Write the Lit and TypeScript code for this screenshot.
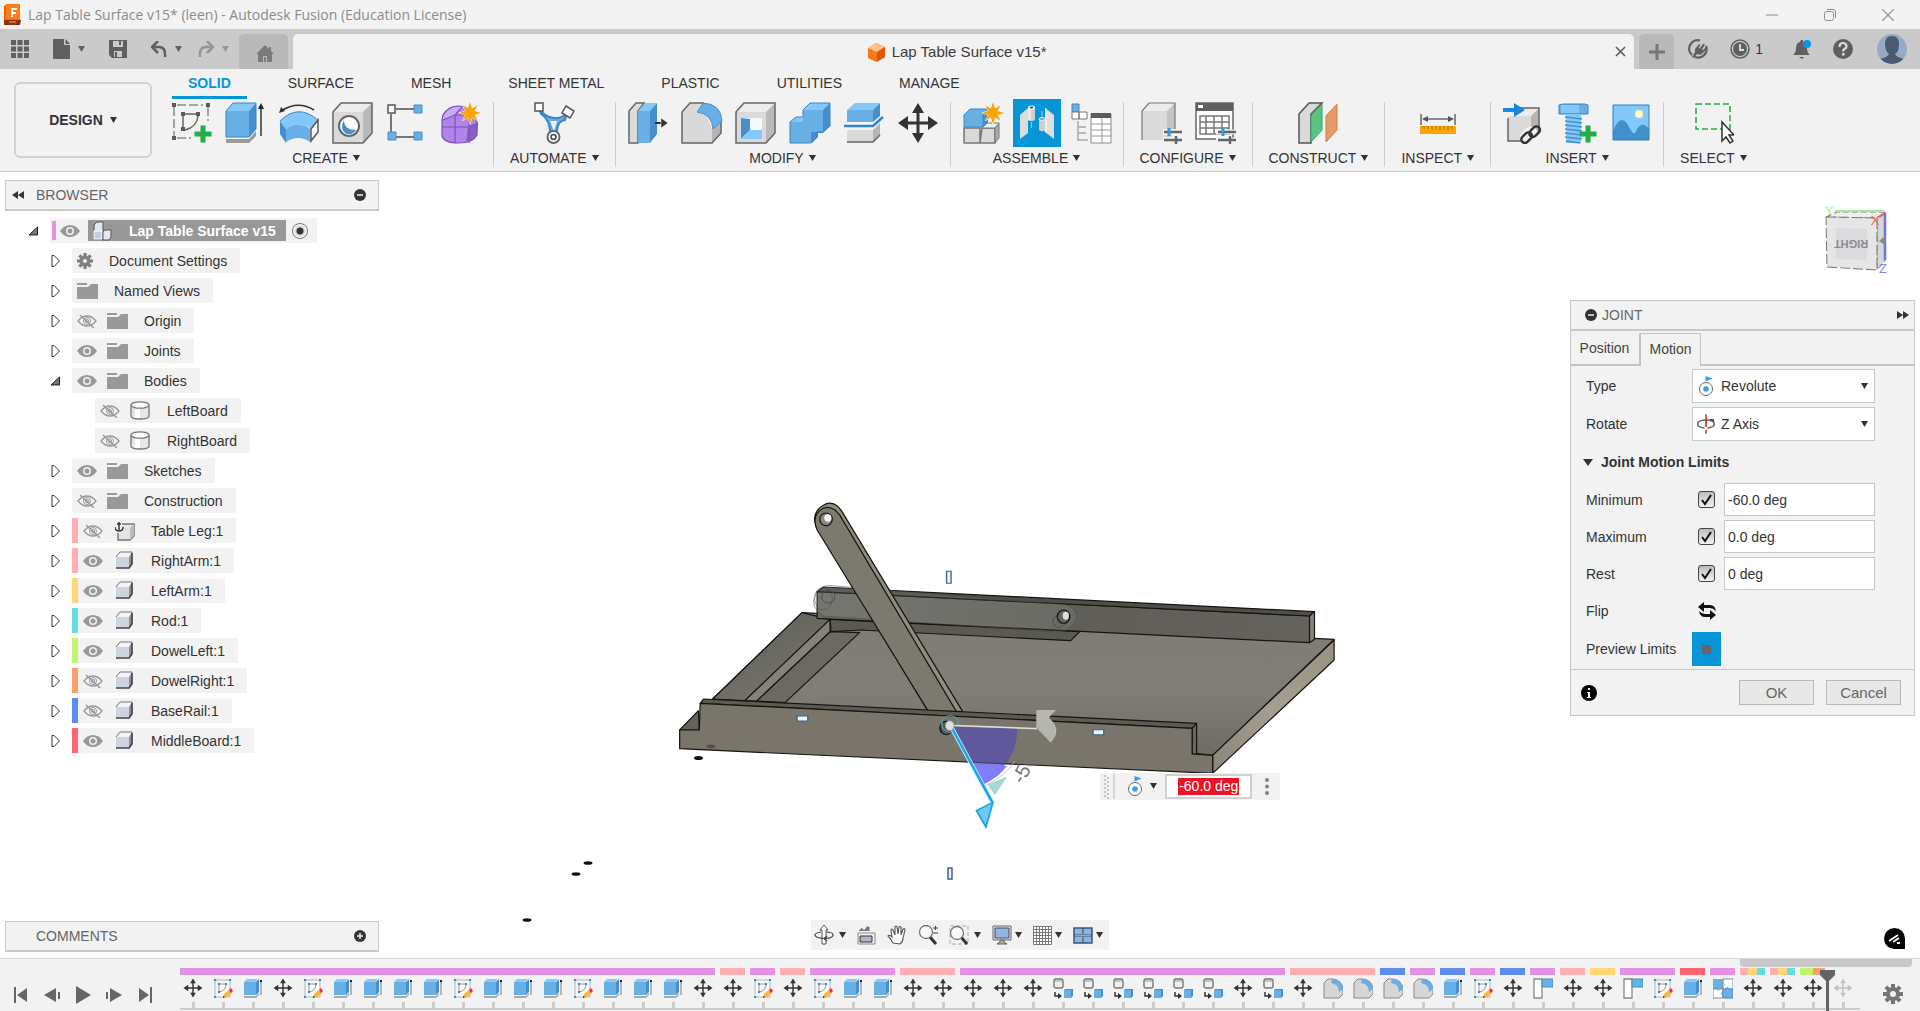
import { LitElement, html, svg, css, nothing, TemplateResult } from "lit";
import { customElement } from "lit/decorators.js";
import { classMap } from "lit/directives/class-map.js";
import { styleMap } from "lit/directives/style-map.js";

type Art = ReturnType<typeof svg>;

/** Wraps drawing content in an inline svg of the given size. */
const pic = (w: number, h: number, art: Art, box = `0 0 ${w} ${h}`) =>
  html`<svg width=${w} height=${h} viewBox=${box} aria-hidden="true">${art}</svg>`;

const caret = () => pic(7, 6, svg`<path d="M0 0h7L3.500 6z" fill="currentColor"/>`);

/* ---------- Ribbon artwork, all on a 42 x 42 board ---------- */

const spark = (x: number, y: number) => svg`<g transform="translate(${x} ${y})">
  <path d="M0-11 2-4.500 7.500-7.500 4.500-2 11 0 4.500 2 7.500 7.500 2 4.500 0 11-2 4.500-7.500 7.500-4.500 2-11 0-4.500-2-7.500-7.500-2-4.500z" fill="#f9a504" stroke="#f2f2f2" stroke-width="1" paint-order="stroke"/></g>`;

const plus = (x: number, y: number) => svg`<path d="M${x - 2.5} ${y - 8.5}h5v6h6v5h-6v6h-5v-6h-6v-5h6z" fill="#22ad4b"/>`;

const moveArt = svg`<path d="M21 1l6 10h-4.500v8.500H31V14l10 7-10 7v-5.500h-8.500V31H27l-6 10-6-10h4.500v-8.500H11V28L1 21l10-7v5.500h8.500V11H15z" fill="#333"/>`;

const ribbon: Record<string, Art> = {
  sketch: svg`<path d="M4 5v30M7 3h26M38 5v14M7 36h14" stroke="#8a8a8a" stroke-width="1.500" stroke-dasharray="9 3" fill="none"/>
    <path d="M13 12h14M13 12v15M28 14q-1 11-13 14" stroke="#666" stroke-width="1.500" fill="none"/>
    <path d="M2 1h4v4H2zM36 1h4v4h-4zM2 34h4v4H2zM11 10h4v4h-4zM26 10h4v4h-4zM11 25h4v4h-4z" fill="#5a5a5a"/>${plus(33, 32)}`,
  extrude: svg`<path d="M2 9 9 1h23l-7 8z" fill="#84c7fb"/><path d="M2 9h23v26H2z" fill="#68afe6"/><path d="M25 9l7-8v26l-7 8z" fill="#468fcb"/>
    <path d="M2 9 9 1h23v26l-7 8H2z" fill="none" stroke="#3f86bf"/><path d="M2 37h23l7-8v5l-7 7H2z" fill="#9b9b9b"/><path d="M37 6v28" stroke="#333" stroke-width="1.500"/><path d="M37 1l3 6h-6z" fill="#222"/>`,
  revolve: svg`<path d="M3 9Q20-2 36 8" fill="none" stroke="#333" stroke-width="1.500"/><path d="M1 11l2-6 4 4z" fill="#333"/>
    <path d="M2 19Q20 1 40 18l-7 9Q20 18 8 27z" fill="#84c7fb"/><path d="M2 19l6 8v14l-6-9z" fill="#468fcb"/><path d="M8 27q12-9 24 0v13q-12-8-24 0z" fill="#68afe6"/>
    <path d="M2 19Q20 1 40 18" fill="none" stroke="#3f86bf"/><path d="M33 27l7-9v12l-7 9z" fill="#fff" stroke="#555" stroke-width="1.500"/>`,
  hole: svg`<path d="M1 10 9 1h31v30l-9 10H1z" fill="#b9b9b9"/><path d="M1 10 9 1h31l-9 9z" fill="#ececec"/><path d="M1 10h30v31H1z" fill="#dadada"/><path d="M1 10 9 1h31v30l-9 10H1z" fill="none" stroke="#666" stroke-width="1.500"/>
    <ellipse cx="17" cy="24" rx="10" ry="10" fill="#fff" stroke="#666" stroke-width="2"/><path d="M12 18q0 10 12 10-3 5-9 4-8-4-3-14z" fill="#468fcb"/>`,
  pattern: svg`<path d="M10 7h18M5 12v18M10 35h18" stroke="#777" stroke-width="2"/><path d="M2 3h7v8H2z" fill="#fff" stroke="#555" stroke-width="1.500"/>
    <path d="M28 3h8v8h-8zM2 30h8v8H2zM28 30h8v8h-8z" fill="#68afe6" stroke="#468fcb"/>`,
  form: svg`<path d="M3 12Q10 2 20 4q12 1 15 9l3 8-1 12q-6 8-18 8-14 1-17-6V18z" fill="#b084ea"/><path d="M28 25l10-4-1 12q-4 6-11 7z" fill="#8a5fc4"/><path d="M3 13Q12 2 24 5l-8 8-13 5z" fill="#cba9fa"/>
    <path d="M2 25h27l9-4M15 13v28M3 18l12-5h14v28M15 13l8-9M2 18v16q2 7 17 7 14 0 18-8V21l-3-8q-4-9-15-9Q8 4 3 13z" fill="none" stroke="#7d50bb" stroke-width="1.200"/>${spark(30, 11)}`,
  automate: svg`<path d="M6 6q5 9 15 10 9 1 13-6l-2 8q-9 1-8 16h-7Q18 18 8 12z" fill="#68afe6" stroke="#3f86bf" stroke-width="2"/><path d="M17 19h7l-3 10z" fill="#f2f2f2"/>
    <path d="M2 1h8v8H2zM33 4l8 5-4 7-8-5z" fill="#fff" stroke="#555" stroke-width="1.500"/><circle cx="20.500" cy="35" r="6" fill="#fff" stroke="#666" stroke-width="2"/><circle cx="20.500" cy="35" r="2.500" fill="none" stroke="#444" stroke-width="1.500"/>`,
  press: svg`<path d="M2 9l7-8h8l-6 8v32H2z" fill="#dcdcdc" stroke="#666" stroke-width="1.500"/><path d="M11 9l7-8h12l-7 8z" fill="#84c7fb"/><path d="M11 9h12v32H11z" fill="#68afe6"/><path d="M23 9l7-8v31l-7 9z" fill="#468fcb"/>
    <path d="M28 21h8" stroke="#333" stroke-width="2"/><path d="M34 16l7 5-7 5z" fill="#333" stroke="#f2f2f2" stroke-width=".5"/>`,
  fillet: svg`<path d="M1 10 9 1h12l-6 9q14 2 15 17l10-8v12l-9 10H1z" fill="#d9d9d9"/><path d="M31 27l9-8v12l-9 10z" fill="#b5b5b5"/><path d="M1 10 9 1h14M40 19v12l-9 10H1V10" fill="none" stroke="#666" stroke-width="1.500"/>
    <path d="M16 10l6-9q18 1 19 18l-9 8Q31 12 16 10z" fill="#68afe6" stroke="#468fcb"/>`,
  shell: svg`<path d="M1 10 9 1h31v30l-9 10H1z" fill="#b9b9b9"/><path d="M1 10 9 1h31l-9 9z" fill="#ececec"/><path d="M1 10h30v31H1z" fill="#dadada"/><path d="M1 10 9 1h31v30l-9 10H1z" fill="none" stroke="#666" stroke-width="1.500"/>
    <path d="M6 16h21v21H6z" fill="#f8f8f8"/><path d="M6 16l9 1v11l-9 9z" fill="#468fcb"/><path d="M6 37l9-9h12v9z" fill="#84c7fb"/>`,
  combine: svg`<path d="M1 21l6-6h7V8l7-7h20v23l-7 7h-5v4l-6 6H1z" fill="#468fcb"/><path d="M1 20h13V8h20v22H22v11H1z" fill="#68afe6"/><path d="M14 8l7-7h20l-7 7zM1 20l6-5h7v5z" fill="#84c7fb"/><path d="M1 20l6-5h7V8l7-7h20v23l-7 6h-6v5l-6 6H1z" fill="none" stroke="#3f86bf"/>`,
  split: svg`<path d="M4 8l8-7h25l-7 7z" fill="#84c7fb"/><path d="M4 8h26v12H4z" fill="#68afe6"/><path d="M30 8l7-7v13l-7 6z" fill="#468fcb"/><path d="M1 24h29l10-9" fill="none" stroke="#2e86d1" stroke-width="2.500"/>
    <path d="M4 28h26v12H4z" fill="#dadada"/><path d="M30 28l7-7v12l-7 7z" fill="#b5b5b5"/><path d="M4 40h26l7-7" fill="none" stroke="#666" stroke-width="1.500"/>`,
  move: moveArt,
  component: svg`<path d="M2 13l6-6h18l-5 6v12H2z" fill="#68afe6" stroke="#3f86bf"/><path d="M21 13l5-6v14l-5 4z" fill="#468fcb"/><path d="M2 26h16v15H2zM20 26h13v15H18z" fill="#d9d9d9" stroke="#777" stroke-width="1.500"/><path d="M33 26l4-5v15l-4 5z" fill="#aaa" stroke="#777"/><path d="M20 26l5-5h12l-4 5z" fill="#eee" stroke="#777"/>${spark(31, 11)}`,
  joint: svg`<path d="M4 13l8-7v25l-8 6z" fill="#dcdcdc"/><path d="M12 6l3-2 4 2v12q-3 2-7 0z" fill="#cfcfcf"/><path d="M12 6h3v13l-3-1z" fill="#e8e8e8"/><ellipse cx="15.500" cy="5.500" rx="3.500" ry="2" fill="#f0f0f0"/><ellipse cx="15.500" cy="5.500" rx="1.800" ry="1" fill="#444"/>
    <path d="M15.500 20v6M26 9v6" stroke="#7dcbf2" stroke-width="1.200"/><path d="M23 17q3 2 6 0v12q-4 1-6-1z" fill="#cfcfcf"/><ellipse cx="26" cy="17" rx="3" ry="1.500" fill="#5aa7d6" stroke="#eee"/><path d="M29 6l9 7v24l-9-7z" fill="#dedede"/><path d="M29 6l2 1v24l-2-1z" fill="#f0f0f0"/>`,
  table: svg`<path d="M2 2h7v8H2z" fill="#68afe6" stroke="#3f86bf"/><path d="M2 10h7v7H2zM9 10h8v7H9z" fill="#fff" stroke="#777"/><path d="M8 19v19h10M8 25h8M8 31h8" fill="none" stroke="#aaa" stroke-width="1.500"/>
    <path d="M21 12h20v29H21z" fill="#fff" stroke="#888"/><path d="M21 11h20v5H21z" fill="#5b5b5b"/><path d="M21 22h20M21 28h20M21 34h20M32 16v25" stroke="#999"/>`,
  configure: svg`<path d="M2 9 9 1h26v28l-6 9H2z" fill="#c4c4c4"/><path d="M2 9 9 1h26l-8 8z" fill="#ececec"/><path d="M2 9h25v29H2z" fill="#dadada"/><path d="M2 38V9l7-8h26v26" fill="none" stroke="#777" stroke-width="1.200"/><path d="M23 30h19M23 38h19" stroke="#f2f2f2" stroke-width="6"/><path d="M24 30h18M24 38h18" stroke="#666" stroke-width="2.500"/><path d="M29 26v8" stroke="#2e9be8" stroke-width="3"/><path d="M36 34v8" stroke="#666" stroke-width="2.500"/>`,
  configTable: svg`<path d="M2 1h37v36H2z" fill="#fff" stroke="#666" stroke-width="1.500"/><path d="M2 1h37v8H2z" fill="#5f5f5f"/><path d="M4 3h5v3H4z" fill="#fff"/><path d="M6 14h29v18H6zM6 20h29M6 26h29M12 14v18M20 14v18M28 14v18" fill="none" stroke="#777" stroke-width="1.500"/><path d="M22 30h20M22 38h20" stroke="#f2f2f2" stroke-width="5"/><path d="M24 30h18M24 38h18" stroke="#666" stroke-width="2.500"/><path d="M29 26v8" stroke="#2e9be8" stroke-width="3"/><path d="M36 34v8" stroke="#666" stroke-width="2.500"/>`,
  construct: svg`<path d="M2 12 12 1h13l-11 11v29H2z" fill="#dadada" stroke="#555" stroke-width="1.500"/><path d="M14 14 25 2v26L14 40z" fill="#5ac582" stroke="#35a764"/><path d="M29 14 40 2v26L29 40z" fill="#e59a67" stroke="#cf8047"/>`,
  inspect: svg`<path d="M4 12v11M38 12v11" stroke="#666" stroke-width="1.500"/><path d="M7 17h28" stroke="#666" stroke-width="1.500"/><path d="M5 17l6-3v6zM37 17l-6-3v6z" fill="#555"/><path d="M3 24h36v8H3z" fill="#f9a504"/><path d="M7 24v3M11 24v3M15 24v4M19 24v3M23 24v4M27 24v3M31 24v4M35 24v3" stroke="#a86b00"/>`,
  insertLink: svg`<path d="M6 12l9-6h22l-9 8z" fill="#ececec"/><path d="M6 14h23v25H6z" fill="#dadada"/><path d="M29 14l8-8v24l-8 8z" fill="#b5b5b5"/><path d="M12 6h25v24M6 16v23h15" fill="none" stroke="#666" stroke-width="1.500"/><path d="M1 6h11V1l11 7-11 7v-5H1z" fill="#1787e0"/>
    <g fill="none" stroke="#f2f2f2" stroke-width="6"><rect x="20" y="30" width="13" height="7" rx="3.500" transform="rotate(-45 26 33)"/></g><g fill="none" stroke="#333" stroke-width="2.500"><rect x="19" y="32" width="12" height="7" rx="3.500" transform="rotate(-45 25 36)"/><rect x="27" y="26" width="12" height="7" rx="3.500" transform="rotate(-45 33 30)"/></g>`,
  bolt: svg`<path d="M3 3l4-1h22l3 1v9H3z" fill="#68afe6" stroke="#3f86bf"/><path d="M5 3h18v8H5z" fill="#84c7fb"/><path d="M10 12h15v29H10z" fill="#84c7fb"/><path d="M9 15l17 2M9 19l17 2M9 23l17 2M9 27l17 2M9 31l17 2M9 35l17 2M10 39l14 2" stroke="#468fcb" stroke-width="1.500"/>${plus(32, 32)}`,
  image: svg`<path d="M3 3h36v35H3z" fill="#84c7fb"/><path d="M3 29q8-20 16-4 4 8 6 6 6-14 14-4v11H3z" fill="#4290cc"/><circle cx="29" cy="12" r="4" fill="#fffbc8" stroke="#e8e6a0"/><path d="M3 3h36v35H3z" fill="none" stroke="#2f7fbd"/>`,
  select: svg`<path d="M4 2h34v25H4z" fill="none" stroke="#22ad4b" stroke-width="1.500" stroke-dasharray="6 3"/><path d="M30 20v19l4-4 4 6 3-2-4-6h5z" fill="#fff" stroke="#333" stroke-width="1.500"/>`,
};

const groups: { label: string; tools: [string, string][] }[] = [
  { label: "CREATE", tools: [["sketch", "Create Sketch"], ["extrude", "Extrude"], ["revolve", "Revolve"], ["hole", "Hole"], ["pattern", "Pattern"], ["form", "Create Form"]] },
  { label: "AUTOMATE", tools: [["automate", "Automated Modeling"]] },
  { label: "MODIFY", tools: [["press", "Press Pull"], ["fillet", "Fillet"], ["shell", "Shell"], ["combine", "Combine"], ["split", "Split Body"], ["move", "Move"]] },
  { label: "ASSEMBLE", tools: [["component", "New Component"], ["joint", "Joint"], ["table", "Joint Table"]] },
  { label: "CONFIGURE", tools: [["configure", "Configure"], ["configTable", "Configuration Table"]] },
  { label: "CONSTRUCT", tools: [["construct", "Offset Plane"]] },
  { label: "INSPECT", tools: [["inspect", "Measure"]] },
  { label: "INSERT", tools: [["insertLink", "Insert Derive"], ["bolt", "Insert Fastener"], ["image", "Canvas"]] },
  { label: "SELECT", tools: [["select", "Select"]] },
];

const ribbonTabs = ["SOLID", "SURFACE", "MESH", "SHEET METAL", "PLASTIC", "UTILITIES", "MANAGE"];

/* ---------- Browser tree ---------- */

/** Eight-toothed gear centred on 0,0 with a hole of radius r. */
const gearArt = (r: number, fill: string) => svg`<g fill=${fill}>
  ${[0, 45, 90, 135].map((a) => svg`<path d="M-2-10h4V10h-4z" transform="rotate(${a})" fill-rule="evenodd" clip-path="url(#ring${r})"/>`)}
  <path fill-rule="evenodd" d="M-7 0a7 7 0 1 1 14 0 7 7 0 1 1-14 0zM${-r} 0a${r} ${r} 0 1 0 ${2 * r} 0 ${r} ${r} 0 1 0 ${-2 * r} 0z"/>
  <circle r=${r} fill="#f2f2f2"/></g>`;

const eyeOn = () => pic(20, 14, svg`<path d="M0 7Q4 1 10 1t10 6q-4 6-10 6T0 7z" fill="#999"/><circle cx="10" cy="7" r="4" fill="#f2f2f2"/><circle cx="10" cy="7" r="2.500" fill="#999"/>`);
const eyeOff = () => pic(20, 14, svg`<path d="M1 7q4-5 9-5t9 5q-4 5-9 5T1 7z" fill="none" stroke="#999" stroke-width="1.300"/><circle cx="10" cy="7" r="3.500" fill="none" stroke="#999"/><circle cx="10" cy="7" r="1.500" fill="none" stroke="#999"/><path d="M3 1l14 13" stroke="#999" stroke-width="1.500"/>`);

const nodeArt: Record<string, () => TemplateResult> = {
  gear: () => pic(16, 16, gearArt(2.5, "#808080"), "-10 -10 20 20"),
  folder: () => pic(21, 16, svg`<path d="M0 0h10v2H0zM0 4h11l3-3h7v15H0z" fill="#999"/>`),
  body: () => pic(21, 19, svg`<path d="M1 4v11q0 3 9 3t9-3V4" fill="#e6e6e8" stroke="#777" stroke-width="1.300"/><path d="M5 6h5v11H5z" fill="#fff"/><ellipse cx="10" cy="4" rx="9" ry="3.200" fill="#fafafa" stroke="#777" stroke-width="1.300"/>`),
  anchored: () => pic(20, 20, svg`<path d="M3 6l4-3h12v12l-4 4H3z" fill="#e4e4e4" stroke="#777" stroke-width="1.500"/><path d="M15 7l4-4v12l-4 4z" fill="#bbb"/><path d="M4 1v8M1 3h6M0 6q0 4 4 4t4-4" fill="none" stroke="#f2f2f2" stroke-width="4"/><path d="M4 1v8M2 3h4M0 6q0 4 4 4t4-4" fill="none" stroke="#333" stroke-width="1.500"/>`),
  part: () => pic(20, 19, svg`<path d="M1 6l4-5h12v12l-3 4H1z" fill="#8a8f99"/><path d="M1 6l4-5h12l-3 5z" fill="#f4f5f7"/><path d="M1 6h13v11H1z" fill="#cdd3df"/><path d="M1 6l4-5h12v12l-3 4" fill="none" stroke="#777"/><path d="M1 17h13l3-4V2" fill="none" stroke="#444" stroke-width="1.500"/>`),
  assembly: () => pic(20, 20, svg`<path d="M2 4l3-3h6v17H2z" fill="#dfe6f0" stroke="#555"/><path d="M2 10h8v8H2z" fill="#c3cfdf" stroke="#fff"/><path d="M11 11l2-2h6v7l-2 3h-6z" fill="#e2e8f0" stroke="#555"/>`),
};

interface Node { level: number; name: string; icon: string; open?: boolean; visible?: boolean; color?: string; }

const nodes: Node[] = [
  { level: 1, name: "Document Settings", icon: "gear" },
  { level: 1, name: "Named Views", icon: "folder" },
  { level: 1, name: "Origin", icon: "folder", visible: false },
  { level: 1, name: "Joints", icon: "folder", visible: true },
  { level: 1, name: "Bodies", icon: "folder", visible: true, open: true },
  { level: 2, name: "LeftBoard", icon: "body", visible: false },
  { level: 2, name: "RightBoard", icon: "body", visible: false },
  { level: 1, name: "Sketches", icon: "folder", visible: true },
  { level: 1, name: "Construction", icon: "folder", visible: false },
  { level: 1, name: "Table Leg:1", icon: "anchored", visible: false, color: "#ffaeb1" },
  { level: 1, name: "RightArm:1", icon: "part", visible: true, color: "#ffaeb1" },
  { level: 1, name: "LeftArm:1", icon: "part", visible: true, color: "#ffd778" },
  { level: 1, name: "Rod:1", icon: "part", visible: true, color: "#65dde2" },
  { level: 1, name: "DowelLeft:1", icon: "part", visible: true, color: "#c5f46f" },
  { level: 1, name: "DowelRight:1", icon: "part", visible: false, color: "#ff9f6b" },
  { level: 1, name: "BaseRail:1", icon: "part", visible: false, color: "#5f8bec" },
  { level: 1, name: "MiddleBoard:1", icon: "part", visible: true, color: "#ff6573" },
];

/* ---------- Timeline ---------- */

const P = "#e391e3", K = "#ffaeb1", B = "#5f8bec", Y = "#ffd778", R = "#ff6573", C = "#65dde2", G = "#c5f46f", O = "#ff9f6b";
const bands: [number, string[]][] = [
  [18, [P]], [1, [K]], [1, [P]], [1, [K]], [3, [P]], [2, [K]], [11, [P]], [3, [K]], [1, [B]], [1, [P]], [1, [B]], [1, [P]],
  [1, [B]], [1, [P]], [1, [K]], [1, [Y]], [2, [P]], [1, [R]], [1, [P]], [1, [K, Y, C]], [1, [K, Y, C]], [1, [G, O]],
];
const featureCodes = "msemseeeeseeeseeemmsmseemmmmmbbbbbbmbmffffesmpmmpsejmmmm";
const featureNames: Record<string, string> = { m: "Move", s: "Sketch", e: "Extrude", b: "Component from body", f: "Fillet", p: "Plane", j: "Joint" };
const featureArt: Record<string, Art> = {
  m: svg`<g transform="scale(.476)">${moveArt}</g>`,
  s: svg`<path d="M2 2h15v17H2z" fill="#f8f8f8" stroke="#b5b5b5"/><path d="M6 6h7q0 7-7 8z" fill="none" stroke="#999"/><path d="M1 1h2v2H1zM16 1h2v2h-2zM1 18h2v2H1zM5 5h2v2H5zM12 5h2v2h-2zM5 13h2v2H5z" fill="#2e8be0"/><path d="M10 20l1-4 5-4 3 3-5 4z" fill="#f8b53c"/><path d="M16 12l2-2 2 3-2 2z" fill="#f03030"/><path d="M10 20l0-2 2 1z" fill="#333"/>`,
  e: svg`<path d="M1 4l3-3h11l-3 3z" fill="#84c7fb"/><path d="M1 4h12v13H1z" fill="#68afe6"/><path d="M13 4l3-3v13l-3 3z" fill="#468fcb"/><path d="M1 18h12l3-3v2l-3 3H1z" fill="#aaa"/><path d="M18 2v15" stroke="#777"/><path d="M17 2h2v2h-2z" fill="#222"/>`,
  b: svg`<rect x="1" y="1" width="9" height="9" rx="2" fill="#f0f0f0" stroke="#777" stroke-width="1.400"/><path d="M2 3h7" stroke="#999"/><path d="M2 14v4h4" fill="none" stroke="#333" stroke-width="1.500"/><path d="M5 15l4 3-4 3z" fill="#333"/><path d="M11 12l1-1h8v7l-2 2h-7z" fill="#468fcb"/><path d="M11 12h7v8h-7z" fill="#68afe6"/>`,
  f: svg`<path d="M1 5l4-4h5q9 1 10 10v5l-4 4H1z" fill="#d6d6d6" stroke="#888"/><path d="M9 1q10 0 11 10l-4 3Q16 6 8 5z" fill="#68afe6"/>`,
  p: svg`<path d="M1 1h8v19H1z" fill="#fff" stroke="#888" stroke-width="1.300"/><path d="M9 1h11v8H9z" fill="#68afe6" stroke="#468fcb"/>`,
  j: svg`<path d="M0 1h10v10H0z" fill="#68afe6"/><path d="M10 1h10v10h-4q-1-3-3 0h-3V8q3-1 0-3z" fill="#fff" stroke="#888"/><path d="M0 11h4q1 3 3 0h3v3q-3 1 0 3v3H0z" fill="#fff" stroke="#888"/><path d="M10 11h3q1-3 3 0h4v9H10v-3q-3-1 0-3z" fill="#68afe6" stroke="#468fcb"/>`,
};

/* ---------- Model drawing ---------- */

const model = svg`
  <svg x="660" y="480" width="700" height="360" viewBox="0 0 1568 1080" preserveAspectRatio="none">
    <defs>
      <linearGradient id="floor" x1="0" y1="0" x2="0" y2="1"><stop offset="0" stop-color="#7d7c75"/><stop offset=".55" stop-color="#807e77"/><stop offset="1" stop-color="#6d6b64"/></linearGradient>
      <linearGradient id="beam" x1="0" y1="0" x2=".7" y2="1"><stop offset="0" stop-color="#595851"/><stop offset=".6" stop-color="#6c6b64"/><stop offset="1" stop-color="#7a7871"/></linearGradient>
      <linearGradient id="rail" x1="0" y1="0" x2="1" y2="0"><stop offset="0" stop-color="#6c6c65"/><stop offset=".5" stop-color="#5f5e58"/><stop offset="1" stop-color="#64625c"/></linearGradient>
      <linearGradient id="side" x1="0" y1="1" x2="1" y2="0"><stop offset="0" stop-color="#8b857a"/><stop offset=".5" stop-color="#a69e91"/><stop offset="1" stop-color="#98917f"/></linearGradient>
    </defs>
    <g class="solid">
      <path d="M318 398 1510 478 1238 826 118 657z" fill="url(#floor)"/>
      <path d="M1510 480v60L1238 880v-54z" fill="url(#side)"/>
      <path d="M318 398 381 418 190 662 118 657z" fill="url(#beam)"/>
      <path d="M381 418v37L217 663l-27-1z" fill="#858379"/>
      <path d="M382 455l65 3L280 668l-63-5z" fill="#6a6962"/>
      <path d="M381 418 940 455l-20 27L450 450l-67 5z" fill="#5a5952"/>
      <path d="M352 335 1455 408v80L352 415z" fill="url(#rail)"/>
      <path d="M352 335l14-14L1466 395l-11 13z" fill="#4f4e48"/>
      <path d="M1455 408l11-13v83l-11 10z" fill="#8a8478"/>
      <path d="M44 750l42-58 2 58z" fill="#64625b"/>
    </g>
    <path d="M375 316 910 374q30 15 20 50-12 32-40 32L365 408q-30-30-18-60 8-26 28-32z" fill="#bbb" fill-opacity=".14" stroke="#444" stroke-opacity=".6" stroke-width="2"/>
    <g fill="none" stroke="#444" stroke-width="2"><ellipse cx="377" cy="350" rx="15" ry="19"/><ellipse cx="366" cy="356" rx="20" ry="34" stroke-opacity=".6"/><ellipse cx="894" cy="424" rx="14" ry="18"/></g>
    <g class="solid">
      <path d="M350 140 346 118q2-30 20-42 16-14 32 3l8 12L678 695l-78-3z" fill="#8f8c80"/>
      <path d="M352 150q-10-30 0-50 18-30 40-10l10 14L664 695l-64-3z" fill="#7c796e"/>
      <ellipse cx="372" cy="118" rx="14" ry="19" fill="#888"/><ellipse cx="376" cy="114" rx="8" ry="11" fill="#fff" stroke="none"/>
      <path d="M90 670l8-13L1202 730l-10 15z" fill="#5c5a53"/>
      <path d="M1192 745l10-15v95l-10-5z" fill="#6a675f"/>
      <path d="M44 750h44l2-80L1192 745v77l46 4v54L44 806z" fill="#79756b"/>
    </g>
    <ellipse cx="904" cy="410" rx="14" ry="20" fill="#65645e" stroke="#111" stroke-width="3"/><ellipse cx="909" cy="407" rx="7" ry="12" fill="#ddd"/>
    <ellipse cx="641" cy="744" rx="14" ry="20" fill="#4e5757" stroke="#111" stroke-width="3"/>
    <ellipse cx="650" cy="732" rx="19" ry="25" fill="none" stroke="#5c9194" stroke-width="4"/>
    <path d="M655 740 800 745q2 100-75 168z" fill="#544eb0" fill-opacity=".72"/>
    <path d="M697 852 777 858q-18 34-52 55z" fill="#817dff"/>
    <path d="M650 736 845 746" stroke="#bbb" stroke-width="5"/><path d="M650 736l195 10" stroke="#eee" stroke-width="2"/>
    <path d="M843 690h44l-36 52-8 4z" fill="#b8b6b1"/><path d="M847 748 870 712q32 38 5 75z" fill="#b5b5b0" stroke="#ccc"/>
    <path d="M727 918q50-32 68-75" fill="none" stroke="#bbb" stroke-width="2"/>
    <path d="M735 914 776 892 750 944z" fill="#a5d8d6" stroke="#86bebc"/>
    <path d="M652 740 742 962" stroke="#cfeefd" stroke-width="10"/><path d="M652 740 744 966" stroke="#1ca4e8" stroke-width="6"/>
    <path d="M709 992 746 967 730 1041z" fill="#6fc9f5" stroke="#19a2e6" stroke-width="4"/>
    <ellipse cx="649" cy="737" rx="10" ry="15" fill="#ddd" stroke="#8a8a8a" stroke-width="2"/>
    <g fill="#edf5fb" stroke="#3c628c" stroke-width="3"><path d="M642 274h10v36h-10zM307 708h24v15h-24zM970 749h24v15h-24z"/></g>
    <ellipse cx="114" cy="799" rx="9" ry="4" fill="#754747" stroke="#222"/>
  </svg>
  <rect x="948" y="868" width="4" height="11" fill="#edf5fb" stroke="#3c628c" stroke-width="1.500"/>
  <text x="1023" y="785" transform="rotate(-62 1023 785)" font-size="20" fill="#777">-5<tspan fill-opacity=".35">6°</tspan></text>
  <g fill="#111"><ellipse cx="698.500" cy="758" rx="4.500" ry="2"/><ellipse cx="588" cy="863" rx="4.500" ry="1.800"/><ellipse cx="576" cy="874" rx="4.500" ry="1.800"/><ellipse cx="527" cy="920" rx="4.500" ry="1.800"/></g>`;

const viewCube = svg`
  <path d="M15 17 26 12h48l-8 6z" fill="#eee" stroke="#777" stroke-dasharray="6 3"/><path d="M66 18l8-6v49l-8 9z" fill="#d6d6d6" stroke="#777" stroke-dasharray="6 3"/>
  <path d="M15 17l51 1v52l-50-3z" fill="#e6e6e7" stroke="#777" stroke-dasharray="10 3"/><path d="M25 28l31 1v31l-31-1z" fill="#d9dbde"/>
  <path d="M24 11h49" stroke="#9dec9d" stroke-width="2"/><path d="M74 13v47" stroke="#7272f0" stroke-width="2.500"/><path d="M74 13l-6 4" stroke="#e55" stroke-width="2"/><path d="M68 41l6-5v9z" fill="#888"/>
  <g font-size="11" text-anchor="middle"><text x="40" y="40" transform="rotate(180 40 44)" font-weight="700" fill="#8a8d90" dy="8">RIGHT</text>
  <text x="18" y="15" font-size="13" fill="#98f098">Y</text><text x="64" y="25" font-size="13" fill="#f06a60">X</text><text x="72" y="73" font-size="13" fill="#8585f5">Z</text></g>`;

const revoluteArt = svg`<circle cx="9" cy="13" r="6.500" fill="#fff" stroke="#666"/><circle cx="9" cy="13" r="2.800" fill="#3d9be9"/><path d="M8.500 6V0l7 2.500-6 2.500z" fill="#3d9be9"/>`;
const axisArt = svg`<path d="M9 0v20" stroke="#d0401c" stroke-width="1.500"/><ellipse cx="9" cy="10" rx="8.500" ry="4" fill="none" stroke="#666" stroke-width="1.500"/><path d="M9 13v3" stroke="#f4f4f4" stroke-width="3"/><path d="M9 4v8" stroke="#d0401c" stroke-width="1.500"/><path d="M12 5l5 0v4z" fill="#555"/>`;

@customElement("app-root")
export class AppRoot extends LitElement {
  static styles = css`
    :host { display: flex; flex-direction: column; min-height: 100vh; background: #fff; color: #333; font: 14px/16px "Liberation Sans", Arial, sans-serif; }
    *, *::before { box-sizing: border-box; }
    svg { display: block; flex: none; }
    button { font: inherit; color: inherit; background: none; border: 0; padding: 0; margin: 0; display: flex; align-items: center; justify-content: center; }
    h1, h2, h3, ul { margin: 0; padding: 0; font: inherit; list-style: none; }

    .title { display: flex; align-items: center; height: 29px; background: #f3f3f3; color: #8c8c8c; padding: 0 26px 0 3px; gap: 7px; }
    .title h1 { flex: 1; font: 14px/20px "Open Sans", sans-serif; }
    .title .wins { display: flex; gap: 46px; }

    .tabs { display: flex; align-items: flex-end; height: 40px; background: #cacaca; color: #606060; }
    .quick { display: flex; align-items: center; align-self: stretch; padding-left: 11px; }
    .quick button { height: 24px; }
    .quick .pair { gap: 8px; }
    .quick .gapL { margin-left: 24px; }
    .quick .gapS { margin-left: 16px; }
    .quick .dim { color: #959595; }
    .home { width: 49px; height: 35px; margin: 0 5px 0 10px; background: #b9b9b9; border-radius: 5px 5px 0 0; color: #7b7b7b; padding: 4px 0 0 3px; }
    .doc { flex: 1; display: flex; align-items: center; height: 35px; background: #f2f2f2; border-radius: 5px 5px 0 0; padding-right: 6px; }
    .doc .name { flex: 1; display: flex; align-items: center; justify-content: center; gap: 6px; padding-left: 8px; padding-top: 1px; font-size: 15px; line-height: 20px; color: #3c3c3c; }
    .doc button { width: 16px; height: 20px; }
    .add { width: 35px; height: 35px; margin-left: 5px; background: #b9b9b9; border-radius: 5px 5px 0 0; color: #777; }
    .status { display: flex; align-items: center; align-self: stretch; padding: 0 13px 0 14px; }
    .status .jobs { gap: 5px; margin: 0 30px 0 22px; color: #34346a; }
    .status .help { margin: 0 24px 0 21px; }

    .ribbon { display: flex; background: #f2f2f2; border-bottom: 1px solid #ccc; height: 103px; }
    .workspace { width: 138px; height: 76px; margin: 13px 0 0 14px; border: 2px solid #d2d2d2; border-radius: 6px; font-weight: 700; gap: 7px; }
    .tools { flex: 1; min-width: 0; }
    .rtabs { display: flex; gap: 25px; padding-left: 20px; height: 30px; align-items: flex-end; }
    .rtabs button { height: 28px; padding: 0 16px 2px; border-bottom: 3px solid transparent; }
    .rtabs .on { font-weight: 700; color: #0696d7; border-color: #0696d7; }
    .groups { display: flex; padding: 3px 0 0 7px; }
    .group { padding: 0 8px; border-right: 1px solid #ccc; height: 65px; }
    .group:last-child { border: 0; }
    .icons { display: flex; justify-content: center; gap: 6px; }
    .icons button { width: 48px; height: 48px; margin-top: -3px; }
    .icons .on { background: #0696d7; }
    .group .label { margin: 0 auto; padding: 0 8px; height: 22px; gap: 5px; }

    .stage { position: relative; flex: 1; display: grid; min-height: 780px; background: #fff; overflow: hidden; }
    .scene { position: absolute; inset: 0; width: 100%; height: 100%; font-family: "Liberation Sans", Arial, sans-serif; }
    .solid path, .solid ellipse { stroke: #16140f; stroke-width: 1.2; vector-effect: non-scaling-stroke; stroke-linejoin: round; }
    .solid ellipse + ellipse { stroke: none; }
    .left, .right, .nav { grid-area: 1 / 1; position: relative; }
    .left { display: flex; flex-direction: column; justify-content: space-between; justify-self: start; width: 374px; margin: 8px 0 6px 5px; }
    .bar { display: flex; align-items: center; height: 31px; background: #f2f2f2; border: 1px solid #c8c8c8; border-bottom-width: 2px; color: #666; padding: 0 12px 0 6px; }
    .bar h2 { flex: 1; padding-left: 12px; }
    .bar.low h2 { padding-left: 24px; }
    .tree { display: flex; flex-direction: column; gap: 5px; padding-top: 7px; margin-left: -5px; }
    .row { display: flex; align-items: center; height: 25px; }
    .l0 { padding-left: 22px; } .l1 { padding-left: 44px; } .l2 { padding-left: 67px; }
    .toggle { width: 22px; margin-right: 6px; height: 25px; display: flex; align-items: center; justify-content: center; }
    .chip { display: flex; align-items: center; align-self: stretch; background: #f2f2f2; padding-right: 13px; }
    .strip { width: 6px; align-self: stretch; }
    .eye { margin-left: 5px; width: 20px; }
    .ico { margin-left: 5px; }
    .eye + .ico { margin-left: 10px; }
    .strip ~ .eye + .ico { margin-left: 12px; }
    .txt { margin-left: 16px; white-space: nowrap; }
    .root { padding: 0 9px 0 2px; }
    .root .strip { width: 4px; margin: 3px 0; }
    .root .eye { margin-left: 4px; }
    .picked { display: flex; align-items: center; align-self: stretch; margin: 2px 6px 2px 8px; padding: 0 10px 0 4px; gap: 17px; background: #989898; color: #fff; font-weight: 700; white-space: nowrap; }
    .root input { appearance: none; margin: 0; width: 16px; height: 16px; border-radius: 50%; border: 1px solid #777; background: radial-gradient(circle, #333 3px, #cfd6de 4px, #fff 7px); }

    .right { justify-self: end; align-self: start; width: 345px; margin: 50px 5px 0 0; }
    .cube { display: flex; margin-left: 241px; height: 78px; overflow: visible; margin-top: -22px; margin-bottom: 22px; }
    .cube svg { overflow: visible; font-family: "Liberation Sans", Arial, sans-serif; }
    .panel { background: #f2f2f2; border: 1px solid #c8c8c8; }
    .phead { display: flex; align-items: center; height: 30px; padding: 0 5px 0 14px; gap: 5px; border-bottom: 2px solid #c8c8c8; color: #666; }
    .phead h2 { flex: 1; }
    .ptabs { display: flex; height: 35px; border-bottom: 2px solid #c4c4c4; padding-top: 2px; color: #444; }
    .ptabs button { width: 68px; padding: 0 1px 2px 0; height: 31px; }
    .ptabs .on { height: 33px; width: 62px; padding: 0 0 3px; background: #f2f2f2; border: 1px solid #c4c4c4; border-left-width: 2px; border-bottom: 0; }
    .form { display: flex; flex-direction: column; gap: 4px; padding: 3px 39px 3px 15px; border-bottom: 1px solid #c8c8c8; }
    .field { display: grid; grid-template-columns: 106px 32px 1fr; align-items: center; min-height: 34px; }
    .field.num { min-height: 33px; }
    .field h3 { grid-column: 1 / -1; display: flex; align-items: center; gap: 8px; font-weight: 700; margin-left: -3px; }
    .combo { grid-column: 2 / -1; display: grid; align-items: center; }
    .combo > * { grid-area: 1 / 1; }
    .combo svg { margin-left: 5px; pointer-events: none; }
    .combo svg:last-child { justify-self: end; margin: 0 7px 0 0; }
    select { appearance: none; width: 100%; height: 34px; margin: 0; padding: 0 20px 0 28px; background: #fff; border: 1px solid #c8c8c8; border-radius: 0; font: inherit; color: #333; }
    input[type="text"] { width: 100%; min-width: 0; height: 33px; margin: 0; padding: 0 3px; background: #fff; border: 1px solid #c8c8c8; border-radius: 0; font: inherit; color: #333; }
    input[type="checkbox"] { appearance: none; margin: 0 0 0 6px; width: 17px; height: 17px; border: 1px solid #444; border-radius: 3px; background: linear-gradient(#bbb, #f2f2f2); }
    .check { display: grid; align-items: center; }
    .check > * { grid-area: 1 / 1; }
    .check svg { margin-left: 8px; pointer-events: none; }
    .flip { width: 30px; height: 30px; }
    .preview { width: 29px; height: 34px; background: #0696d7; }
    .preview::before { content: ""; width: 9px; height: 9px; background: #666; }
    .pfoot { display: flex; align-items: center; height: 45px; padding: 0 13px 0 10px; gap: 12px; }
    .pfoot button { width: 75px; height: 25px; background: #e8e8e8; border: 1px solid #b8b8b8; color: #666; font-size: 15px; }
    .pfoot .info { width: auto; height: auto; border: 0; background: none; margin-right: auto; }

    .hud { position: absolute; left: 57.3%; top: 76.4%; display: flex; align-items: center; width: 180px; height: 27px; background: #f2f2f2; }
    .hud .grip { margin: 0 11px 0 4px; }
    .hud .type { gap: 6px; margin-right: 8px; }
    .hud .val { flex: none; width: 87px; height: 25px; border: 2px solid #d0d0d0; background: #fff; display: flex; align-items: center; padding-left: 11px; }
    .hud input[type="text"] { width: 61px; height: 17px; border: 0; padding: 0 1px; background: #ec1326; color: #fff; }
    .hud .more { margin-left: 13px; }

    .nav { justify-self: center; align-self: end; display: flex; align-items: center; height: 30px; margin-bottom: 8px; padding: 0 6px 0 3px; background: #f2f2f2; }
    .nav button { height: 30px; gap: 5px; margin-right: 11px; }
    .nav .tight { gap: 3px; }
    .nav button:last-child { margin: 0; }
    .assist { grid-area: 1 / 1; position: relative; justify-self: end; align-self: end; margin: 0 15px 9px 0; color: #050505; }

    .timeline { display: flex; height: 53px; background: #f2f2f2; border-top: 1px solid #d8d8d8; overflow: hidden; }
    .play { display: flex; align-items: center; gap: 13px; padding: 19px 0 0 12px; width: 168px; flex: none; color: #666; }
    .play button { width: 18px; height: 20px; }
    .track { flex: 1; min-width: 0; position: relative; padding: 9px 0 0 12px; }
    .scroll { position: absolute; right: -52px; top: 0; width: 172px; height: 8px; border-radius: 0 0 4px 4px; background: #c8c8c8; }
    .bands, .feats { display: grid; grid-template-columns: repeat(56, 30px); }
    .band { display: flex; height: 7px; margin-right: 5px; }
    .band i { flex: 1; }
    .feats { padding-top: 3px; }
    .feat { width: 26px; }
    .feat svg { margin: 0 auto; }
    .ticks { display: grid; grid-template-columns: repeat(56, 30px); height: 8px; margin-top: 3px; width: max-content; }
    .ticks i { border-bottom: 2px solid #ccc; display: flex; justify-content: center; padding-right: 3px; }
    .ticks i::before { content: ""; width: 3px; background: #ccc; }
    .feat.later { opacity: .25; }
    .marker { position: absolute; left: 1652px; top: 11px; color: #646464; }
    .gear { width: 60px; flex: none; padding: 18px 0 0 6px; color: #757575; position: relative; }
  `;

  private badge(sign: "minus" | "plus") {
    return pic(12, 12, svg`<circle cx="6" cy="6" r="6" fill="#333"/><path d="M3 6h6${sign === "plus" ? "M6 3v6" : ""}" stroke="#f2f2f2" stroke-width="1.500"/>`);
  }

  private renderTop() {
    return html`
      <header class="title">
        ${pic(18, 21, svg`<path d="M1 2l3-2h13v16l-1 5H1z" fill="#f3640a"/><path d="M3 0h14v15H3z" fill="#ff7a1a"/><path d="M1 16h17l-1 5H1z" fill="#8d3508"/><path d="M8 4h6v2h-4v2h3v2h-3v3H8z" fill="#fff"/><path d="M6 18h7" stroke="#e8b089"/>`)}
        <h1>Lap Table Surface v15* (leen) - Autodesk Fusion (Education License)</h1>
        <div class="wins">
          <button aria-label="Minimize">${pic(12, 12, svg`<path d="M0 6h12" stroke="currentColor"/>`)}</button>
          <button aria-label="Restore">${pic(12, 12, svg`<rect x=".5" y="2.500" width="9" height="9" rx="2" fill="none" stroke="currentColor"/><path d="M3 .5h6q2.500 0 2.500 2.500v6" fill="none" stroke="currentColor"/>`)}</button>
          <button aria-label="Close">${pic(12, 12, svg`<path d="M0 0l12 12M12 0 0 12" stroke="currentColor" stroke-width="1.200"/>`)}</button>
        </div>
      </header>
      <nav class="tabs" aria-label="Documents">
        <div class="quick">
          <button aria-label="Data panel">${pic(18, 18, svg`<path d="M0 0h5v5H0zM6.500 0h5v5h-5zM13 0h5v5h-5zM0 6.500h5v5H0zM6.500 6.500h5v5h-5zM13 6.500h5v5h-5zM0 13h5v5H0zM6.500 13h5v5h-5zM13 13h5v5h-5z" fill="currentColor"/>`)}</button>
          <button class="pair gapL" aria-label="File">${pic(17, 20, svg`<path d="M0 0h11v6h6v14H0zM12.500 0 17 5h-4.500z" fill="currentColor"/>`)}${caret()}</button>
          <button class="gapL" aria-label="Save">${pic(18, 18, svg`<path fill-rule="evenodd" d="M0 0h18v18H3l-3-3zM4 1v6h10V1zM5 11v6h8v-6z" fill="currentColor"/><path d="M10 1h2v4h-2zM6 12h2v5H6z" fill="currentColor"/>`)}</button>
          <button class="pair gapL" aria-label="Undo">${pic(16, 16, svg`<path d="M2 6h6q7 0 6 10" fill="none" stroke="currentColor" stroke-width="2.500"/><path d="M7 0 1 6l6 6" fill="none" stroke="currentColor" stroke-width="2.500"/>`)}${caret()}</button>
          <button class="pair gapS dim" aria-label="Redo">${pic(16, 16, svg`<path d="M14 6H8Q1 6 2 16" fill="none" stroke="currentColor" stroke-width="2.500"/><path d="M9 0l6 6-6 6" fill="none" stroke="currentColor" stroke-width="2.500"/>`)}${caret()}</button>
        </div>
        <button class="home" aria-label="Home">${pic(18, 17, svg`<path fill-rule="evenodd" d="M9 0l4 4V2h2v4l3 3h-2v8h-5v-6H7v6H2V9H0z" fill="currentColor"/><path d="M8 12h2v5H8z" fill="currentColor"/>`)}</button>
        <div class="doc">
          <div class="name">${pic(19, 19, svg`<path d="M1 5l8-5 9 4v10l-9 5-8-4z" fill="#f47a20"/><path d="M1 5l8-5 9 4-8 5z" fill="#ffc08a"/><path d="M10 9l8-5v10l-8 5z" fill="#e0560c"/>`)}<span>Lap Table Surface v15*</span></div>
          <button aria-label="Close document">${pic(11, 11, svg`<path d="M1 1l9 9M10 1 1 10" stroke="#606060" stroke-width="1.700"/>`)}</button>
        </div>
        <button class="add" aria-label="New document">${pic(16, 16, svg`<path d="M8 0v16M0 8h16" stroke="currentColor" stroke-width="3"/>`)}</button>
        <div class="status">
          <button aria-label="Extensions">${pic(20, 20, svg`<path d="M12 1.500A8.500 8.500 0 0 0 4 16M7 18a8.500 8.500 0 0 0 11-11" fill="none" stroke="currentColor" stroke-width="2.300"/><path d="M7 10l4-5 1.500 1-2 3 1 .5 4-5 1.500 1-3 5 1 .5 3-3 1 1-4 5q-3 3-6 1l-3 4-2-1 3-5z" fill="currentColor"/>`)}</button>
          <button class="jobs" aria-label="Job status">${pic(20, 20, svg`<circle cx="10" cy="10" r="9" fill="none" stroke="#606060" stroke-width="1.500"/><circle cx="10" cy="10" r="7" fill="#606060"/><path d="M10 5v6h4" fill="none" stroke="#ddd" stroke-width="1.800"/>`)}<span>1</span></button>
          <button aria-label="Notifications">${pic(19, 20, svg`<path d="M0 16q3-2 3-7 0-5 4-6l1-2h2v2q4 2 4 6 0 5 3 7zM6 18h5l-2 2z" fill="currentColor"/><circle cx="14" cy="5" r="4" fill="#0696e8"/>`)}</button>
          <button class="help" aria-label="Help">${pic(20, 20, svg`<circle cx="10" cy="10" r="10" fill="currentColor"/><path d="M6.500 8q0-4 3.500-4t3.500 3.500Q13.500 9 11.500 10 10 11 10 12.500" fill="none" stroke="#ddd" stroke-width="2.200"/><path d="M9 14h2.500v2.500H9z" fill="#ddd"/>`)}</button>
          <button aria-label="Account">${pic(30, 30, svg`<defs><clipPath id="face"><circle cx="15" cy="15" r="15"/></clipPath></defs><g clip-path="url(#face)"><path d="M0 0h30v30H0z" fill="#96a9c6"/><path d="M8 10q0-8 7-8t7 8-4 10q1 3 9 5v6H2v-6q8-1 10-5-4-3-4-10z" fill="#4b5a6e"/></g>`)}</button>
        </div>
      </nav>
      <div class="ribbon">
        <button class="workspace"><span>DESIGN</span>${caret()}</button>
        <div class="tools">
          <div class="rtabs">${ribbonTabs.map((t, i) => html`<button class=${classMap({ on: i === 0 })}>${t}</button>`)}</div>
          <div class="groups">
            ${groups.map((g) => html`<div class="group">
              <div class="icons">${g.tools.map(([k, n]) => html`<button class=${classMap({ on: k === "joint" })} aria-label=${n}>${pic(42, 42, ribbon[k])}</button>`)}</div>
              <button class="label">${g.label}${caret()}</button>
            </div>`)}
          </div>
        </div>
      </div>`;
  }

  private toggle(open: boolean) {
    return html`<button class="toggle" aria-label=${open ? "Collapse" : "Expand"}>${open
      ? pic(10, 10, svg`<path d="M9.500 1v8H1z" fill="#777" stroke="#222"/>`)
      : pic(9, 12, svg`<path d="M1 .5v11h2l5.500-5.500L3 .5z" fill="#fff" stroke="#333"/>`)}</button>`;
  }

  private renderNode(n: Node) {
    return html`<li class="row l${n.level}">
      ${n.level === 2 ? html`<span class="toggle"></span>` : this.toggle(!!n.open)}
      <div class="chip">
        ${n.color ? html`<span class="strip" style=${styleMap({ background: n.color })}></span>` : nothing}
        ${n.visible === undefined ? nothing : html`<button class="eye" aria-label=${n.visible ? "Hide" : "Show"}>${n.visible ? eyeOn() : eyeOff()}</button>`}
        <span class="ico">${nodeArt[n.icon]()}</span>
        <span class="txt">${n.name}</span>
      </div>
    </li>`;
  }

  private renderLeft() {
    return html`<aside class="left">
      <section>
        <div class="bar">${pic(12, 8, svg`<path d="M6 0v8L0 4zM12 0v8L6 4z" fill="#333"/>`)}<h2>BROWSER</h2><button aria-label="Collapse browser">${this.badge("minus")}</button></div>
        <ul class="tree">
          <li class="row l0">${this.toggle(true)}
            <div class="chip root"><span class="strip" style=${styleMap({ background: P })}></span>
              <button class="eye" aria-label="Hide">${eyeOn()}</button>
              <div class="picked">${nodeArt.assembly()}<span>Lap Table Surface v15</span></div>
              <input type="radio" checked aria-label="Activate component" />
            </div></li>
          ${nodes.map((n) => this.renderNode(n))}
        </ul>
      </section>
      <div class="bar low"><h2>COMMENTS</h2><button aria-label="Expand comments">${this.badge("plus")}</button></div>
    </aside>`;
  }

  private renderLimit(id: string, label: string, value: string) {
    return html`<div class="field num">
      <label for=${id}>${label}</label>
      <div class="check"><input type="checkbox" checked aria-label="Enable ${label}" />${pic(13, 13, svg`<path d="M2 7l3 4 6-9" fill="none" stroke="#111" stroke-width="2"/>`)}</div>
      <input type="text" id=${id} .value=${value} />
    </div>`;
  }

  private renderJoint() {
    return html`<aside class="right">
      <div class="cube">${pic(84, 80, viewCube)}</div>
      <section class="panel">
        <div class="phead"><button aria-label="Collapse dialog">${this.badge("minus")}</button><h2>JOINT</h2>${pic(12, 8, svg`<path d="M0 0v8l6-4zM6 0v8l6-4z" fill="#333"/>`)}</div>
        <div class="ptabs"><button>Position</button><button class="on">Motion</button></div>
        <div class="form">
          <div class="field"><label for="type">Type</label><div class="combo"><select id="type"><option>Revolute</option></select>${pic(18, 20, revoluteArt)}${caret()}</div></div>
          <div class="field"><label for="rotate">Rotate</label><div class="combo"><select id="rotate"><option>Z Axis</option></select>${pic(18, 20, axisArt)}${caret()}</div></div>
          <div class="field"><h3>${pic(10, 7, svg`<path d="M0 0h10L5 7z" fill="#333"/>`)}Joint Motion Limits</h3></div>
          ${this.renderLimit("min", "Minimum", "-60.0 deg")}
          ${this.renderLimit("max", "Maximum", "0.0 deg")}
          ${this.renderLimit("rest", "Rest", "0 deg")}
          <div class="field"><span>Flip</span><button class="flip" aria-label="Flip">${pic(20, 18, svg`<path d="M1 5l6-5v3h6q5 0 6 6-3-3-6-3H7v4zM19 13l-6 5v-3H8q-5 0-6-6 3 3 6 3h5V8z" fill="#111"/>`)}</button></div>
          <div class="field"><span>Preview Limits</span><button class="preview" aria-label="Preview limits"></button></div>
        </div>
        <div class="pfoot"><button class="info" aria-label="Information">${pic(16, 16, svg`<circle cx="8" cy="8" r="8" fill="#050505"/><path d="M6 7h3v5h1v1H6v-1h1V8H6zM7 3h2v2H7z" fill="#fff"/>`)}</button><button>OK</button><button>Cancel</button></div>
      </section>
    </aside>`;
  }

  private renderNav() {
    return html`<div class="nav">
      <button aria-label="Orbit">${pic(20, 20, svg`<path d="M10 0l4 5h-2v14H8V5H6z" fill="#fff" stroke="#555"/><path d="M12 7q7 0 7 3t-8 3.500Q1 13 1 10q0-2 6-3M13 11l-3 2.500 3 2.500" fill="none" stroke="#444" stroke-width="1.200"/>`)}${caret()}</button>
      <button aria-label="Look At">${pic(19, 19, svg`<path d="M1 7h17v11H1z" fill="#f4f4f4" stroke="#888"/><path d="M3 10h12v6H3z" fill="#aeb8c8" stroke="#333"/><path d="M2 5l3-3v2h3l2-3 2 0v4" fill="#777" stroke="#777"/>`)}</button>
      <button aria-label="Pan">${pic(20, 20, svg`<path d="M6 18q-2-4-5-7 1-2 4 1L4 5q1-2 2 0l2 5V2q1-2 2 0l1 7 1-7q1-1 2 0v8l2-6q2-1 2 1l-2 8q0 4-3 6z" fill="#fff" stroke="#555" stroke-width="1.100"/>`)}</button>
      <button aria-label="Zoom">${pic(20, 20, svg`<path d="M12 12l6 7" stroke="#333" stroke-width="3"/><circle cx="8" cy="7" r="6.500" fill="#f4f9fd" stroke="#777" stroke-width="1.300"/><path d="M15 3h5M17.500 1v4M15 8h5" stroke="#444"/>`)}</button>
      <button aria-label="Fit">${pic(20, 20, svg`<path d="M1 1h18v18H1z" fill="none" stroke="#aaa" stroke-dasharray="4 2"/><path d="M12 12l6 7" stroke="#333" stroke-width="3"/><circle cx="8" cy="8" r="6.500" fill="#f4f9fd" stroke="#777" stroke-width="1.300"/>`)}${caret()}</button>
      <button class="tight" aria-label="Display Settings">${pic(20, 20, svg`<path d="M1 1h18v14H1z" fill="#e8e8e8" stroke="#666"/><path d="M3 3h14v10H3z" fill="#8fb7e0" stroke="#446"/><path d="M8 15h4v2l3 2H5l3-2z" fill="#aaa" stroke="#666"/>`)}${caret()}</button>
      <button class="tight" aria-label="Grid and Snaps">${pic(19, 19, svg`<path d="M.5.500h18v18H.5z" fill="#fff"/><path d="M.5.500h18v18H.5zM3.500 0v19M6.500 0v19M9.500 0v19M12.500 0v19M15.500 0v19M0 3.500h19M0 6.500h19M0 9.500h19M0 12.500h19M0 15.500h19" fill="none" stroke="#777"/>`)}${caret()}</button>
      <button class="tight" aria-label="Viewports">${pic(20, 17, svg`<path d="M1 1h18v15H1z" fill="#8fb4dc" stroke="#3a567a" stroke-width="1.500"/><path d="M10 1v15M1 8.500h18" stroke="#3a567a" stroke-width="2"/><path d="M10 2v13M2 8.500h16" stroke="#cfe2f5" stroke-width=".6"/>`)}${caret()}</button>
    </div>`;
  }

  private renderTimeline() {
    const feats = [...featureCodes];
    return html`<footer class="timeline">
      <div class="play">
        <button aria-label="Go to start">${pic(14, 16, svg`<path d="M0 0h2v16H0zM13 1v14L3 8z" fill="currentColor"/>`)}</button>
        <button aria-label="Step back">${pic(16, 14, svg`<path d="M12 0v14L0 7zM14 4h2v7h-2z" fill="currentColor"/>`)}</button>
        <button aria-label="Play">${pic(15, 18, svg`<path d="M0 0l15 9L0 18z" fill="currentColor"/>`)}</button>
        <button aria-label="Step forward">${pic(16, 14, svg`<path d="M4 0v14l12-7zM0 4h2v7H0z" fill="currentColor"/>`)}</button>
        <button aria-label="Go to end">${pic(14, 16, svg`<path d="M12 0h2v16h-2zM1 1v14l10-7z" fill="currentColor"/>`)}</button>
      </div>
      <div class="track">
        <div class="bands">${bands.map(([n, cs]) => html`<div class="band" style=${styleMap({ gridColumn: `span ${n}` })}>${cs.map((c) => html`<i style=${styleMap({ background: c })}></i>`)}</div>`)}</div>
        <div class="feats">${feats.map((f, i) => html`<button class=${classMap({ feat: true, later: i === 55 })} aria-label=${featureNames[f]}>${pic(20, 21, featureArt[f])}</button>`)}</div>
        <div class="ticks">${feats.map(() => html`<i></i>`)}</div>
        <div class="scroll"></div>
        <div class="marker">${pic(15, 41, svg`<path d="M0 0h15v5l-6 6v30H6V11L0 5z" fill="currentColor"/>`)}</div>
      </div>
      <button class="gear" aria-label="Timeline settings">${pic(20, 20, gearArt(3, "#757575"), "-10 -10 20 20")}</button>
    </footer>`;
  }

  render() {
    return html`
      ${this.renderTop()}
      <main class="stage">
        <svg class="scene" viewBox="0 172 1920 786" role="img" aria-label="Model">${model}</svg>
        ${this.renderLeft()}
        ${this.renderJoint()}
        <div class="hud">
          <span class="grip">${pic(11, 25, svg`<path d="M1 1v24M4 3v22" stroke="#b5b5b5" stroke-width="1.500" stroke-dasharray="2 2"/><path d="M10 0v25" stroke="#bbb"/>`)}</span>
          <button class="type" aria-label="Joint type">${pic(18, 20, revoluteArt)}${caret()}</button>
          <div class="val"><input type="text" aria-label="Angle" .value=${"-60.0 deg"} /></div>
          <button class="more" aria-label="More">${pic(4, 17, svg`<circle cx="2" cy="2" r="2" fill="#808080"/><circle cx="2" cy="8.500" r="2" fill="#808080"/><circle cx="2" cy="15" r="2" fill="#808080"/>`)}</button>
        </div>
        ${this.renderNav()}
        <button class="assist" aria-label="Assistant">${pic(21, 21, svg`<path d="M10.500 0A10.500 10.500 0 0 1 21 10.500V21H10.500a10.500 10.500 0 0 1 0-21z" fill="currentColor"/><path d="M5 13l9-6M9 14l6-4M13 15h3" stroke="#fff" stroke-width="1.800"/>`)}</button>
      </main>
      ${this.renderTimeline()}`;
  }
}
